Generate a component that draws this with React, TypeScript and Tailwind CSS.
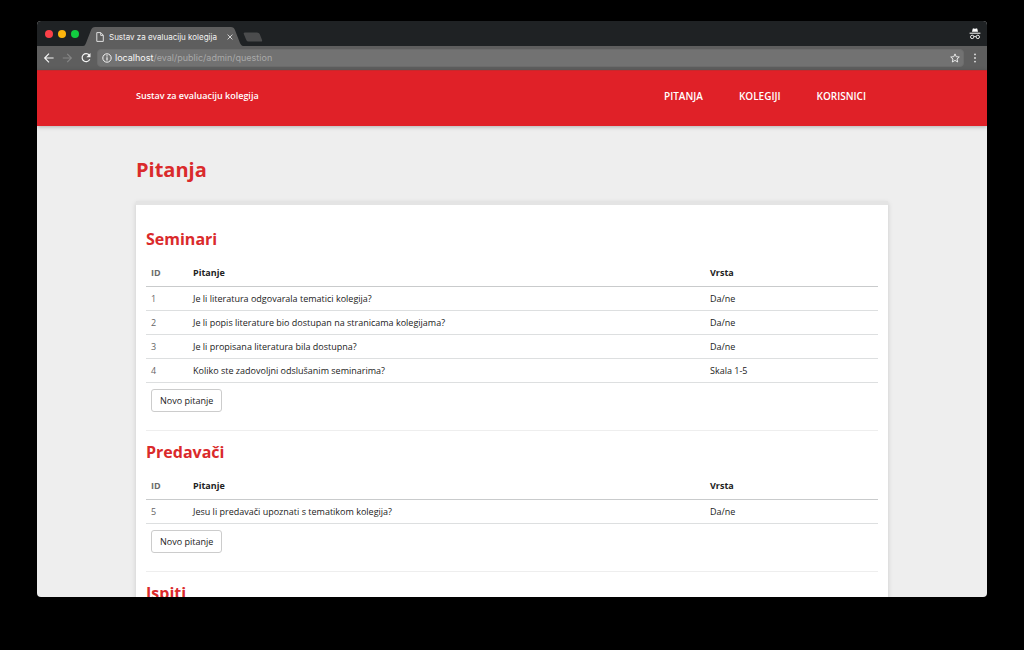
import React from "react";

type Question = { id: number; text: string; kind: string };
type Section = { title: string; questions: Question[] };

const sections: Section[] = [
  {
    title: "Seminari",
    questions: [
      { id: 1, text: "Je li literatura odgovarala tematici kolegija?", kind: "Da/ne" },
      { id: 2, text: "Je li popis literature bio dostupan na stranicama kolegijama?", kind: "Da/ne" },
      { id: 3, text: "Je li propisana literatura bila dostupna?", kind: "Da/ne" },
      { id: 4, text: "Koliko ste zadovoljni odslušanim seminarima?", kind: "Skala 1-5" },
    ],
  },
  {
    title: "Predavači",
    questions: [{ id: 5, text: "Jesu li predavači upoznati s tematikom kolegija?", kind: "Da/ne" }],
  },
  { title: "Ispiti", questions: [] },
];

const navItems = ["Pitanja", "Kolegiji", "Korisnici"];

function TabStrip() {
  return (
    <div className="flex h-[25px] shrink-0 items-end bg-[#1f2224] pr-1">
      <div className="flex items-center gap-[5px] self-center pl-2">
        <span className="size-2 rounded-full bg-[#fc4048]" />
        <span className="size-2 rounded-full bg-[#fdb50c]" />
        <span className="size-2 rounded-full bg-[#12cd40]" />
      </div>
      <div className="relative ml-1 flex h-[19px] w-[160px] items-center pl-[13px] pr-[9px]">
        <svg className="absolute inset-0 size-full" viewBox="0 0 159 19" preserveAspectRatio="none" aria-hidden="true">
          <path d="M0 19C2 19 2 18 3 16L8 3Q9 0 12 0H147Q150 0 151 3L156 16C157 18 158 19 159 19Z" fill="#5e5e5e" />
        </svg>
        <svg className="relative mr-[5px] h-[10px] w-2 shrink-0" viewBox="0 0 8 10" fill="none" stroke="#dedede" aria-hidden="true">
          <path d="M.8.6H4.800L7.300 3.200V9.400H.8ZM4.700.8V3.400H7.200" />
        </svg>
        <span className="relative flex-1 whitespace-nowrap text-[8px] leading-3 text-[#f3f3f3]">Sustav za evaluaciju kolegija</span>
        <button type="button" aria-label="Zatvori karticu" className="relative flex size-2 items-center justify-center">
          <svg className="size-[6px]" viewBox="0 0 6 6" stroke="#d2d2d2" aria-hidden="true">
            <path d="M.6.6 5.400 5.400M5.400.6.6 5.400" />
          </svg>
        </button>
      </div>
      <button type="button" aria-label="Nova kartica" className="mb-1 h-[10px] w-5">
        <svg className="size-full" viewBox="0 0 20 10" aria-hidden="true">
          <path d="M2 .5H14Q16 .5 16.700 2L19 8Q19.500 9.500 18 9.500H5.500Q4 9.500 3.300 8L.8 2Q.3.5 2 .5Z" fill="#4b4c4d" />
        </svg>
      </button>
      <svg className="ml-auto mr-[2px] h-3 w-3 self-center" viewBox="0 0 12 12" fill="none" aria-hidden="true">
        <path d="M3 3.800 3.700.8Q3.900.2 4.500.4L6 .8 7.500.4Q8.100.2 8.300.8L9 3.800Z" fill="#fff" />
        <path d="M.6 5.200H11.400" stroke="#fff" />
        <circle cx="3.200" cy="8.900" r="1.700" stroke="#fff" strokeWidth=".9" />
        <circle cx="8.800" cy="8.900" r="1.700" stroke="#fff" strokeWidth=".9" />
        <path d="M4.900 8.600Q6 7.900 7.100 8.600" stroke="#fff" strokeWidth=".8" />
      </svg>
    </div>
  );
}

function Toolbar() {
  return (
    <div className="flex h-6 shrink-0 items-center bg-[#5e5e5e] pl-[6px] pr-[9px]">
      <button type="button" aria-label="Natrag" className="size-3">
        <svg className="size-full" viewBox="0 0 12 12" fill="none" stroke="#f4f4f4" strokeWidth="1.200" aria-hidden="true">
          <path d="M10.600 6H1.800M6 1.700 1.700 6 6 10.300" />
        </svg>
      </button>
      <button type="button" aria-label="Naprijed" className="ml-[6px] size-3">
        <svg className="size-full" viewBox="0 0 12 12" fill="none" stroke="#868686" strokeWidth="1.100" aria-hidden="true">
          <path d="M1.800 6H10.200M6.200 1.800 10.400 6 6.200 10.200" />
        </svg>
      </button>
      <button type="button" aria-label="Osvježi" className="ml-[7px] size-3">
        <svg className="size-full" viewBox="0 0 12 12" fill="none" aria-hidden="true">
          <path d="M9.300 3.200A4 4 0 1 0 9.800 7.300" stroke="#f4f4f4" strokeWidth="1.200" />
          <path d="M10.500 1V5.200H6.300Z" fill="#f4f4f4" />
        </svg>
      </button>
      <div className="ml-[5px] flex h-[18px] flex-1 items-center rounded-sm border border-[#6c6c6c] bg-[#727272] pl-1 pr-[3px]">
        <svg className="size-[10px]" viewBox="0 0 10 10" fill="none" stroke="#f4f4f4" aria-hidden="true">
          <circle cx="5" cy="5" r="4.200" />
          <path d="M5 4.300V7.500M5 2.300V3.400" strokeWidth="1.200" />
        </svg>
        <a href="#" className="ml-[3px] text-[9px] leading-3 text-[#a9a9a9]">
          <span className="text-[#f6f6f6]">localhost</span>/eval/public/admin/question
        </a>
        <button type="button" aria-label="Dodaj oznaku" className="ml-auto size-[10px]">
          <svg className="size-full" viewBox="0 0 10 10" fill="none" stroke="#f4f4f4" strokeWidth=".9" aria-hidden="true">
            <path d="M5 .9 6.200 3.700 9.300 4 7 6 7.700 9 5 7.400 2.300 9 3 6 .7 4 3.800 3.700Z" />
          </svg>
        </button>
      </div>
      <button type="button" aria-label="Izbornik" className="ml-2 h-[10px] w-[6px]">
        <svg className="size-full" viewBox="0 0 6 10" fill="#e6e6e6" aria-hidden="true">
          <circle cx="3" cy="1.400" r=".9" />
          <circle cx="3" cy="5" r=".9" />
          <circle cx="3" cy="8.600" r=".9" />
        </svg>
      </button>
    </div>
  );
}

function QuestionTable({ questions }: { questions: Question[] }) {
  return (
    <table className="mt-[11px] w-full table-fixed border-separate border-spacing-0 text-left text-[9px] leading-3 text-[#222222]">
      <thead>
        <tr className="h-[26px] font-bold [&>th]:border-b [&>th]:border-[#c9cbcc] [&>th]:px-[5px] [&>th]:pb-[2px]">
          <th className="w-[42px] text-[#6a6a6a]">ID</th>
          <th>Pitanje</th>
          <th className="w-[173px]">Vrsta</th>
        </tr>
      </thead>
      <tbody>
        {questions.map((q) => (
          <tr key={q.id} className="h-6 [&>td]:border-b [&>td]:border-[#dddfe0] [&>td]:px-[5px]">
            <td className="text-[#666666]">{q.id}</td>
            <td>{q.text}</td>
            <td>{q.kind}</td>
          </tr>
        ))}
      </tbody>
    </table>
  );
}

function QuestionSection({ title, questions }: Section) {
  return (
    <section className="border-t border-[#eeeeee] pt-[10px] first:border-t-0 first:pt-[13px]">
      <h2 className="text-[16px] font-bold leading-[22px] text-[#da2a2b]">{title}</h2>
      {questions.length > 0 && (
        <>
          <QuestionTable questions={questions} />
          <button type="button" className="mb-[18px] ml-[5px] mt-[6px] h-[23px] rounded-[3px] border border-[#cccccc] bg-white px-2 text-[9px] leading-3 text-[#222222]">
            Novo pitanje
          </button>
        </>
      )}
    </section>
  );
}

export default function App() {
  return (
    <div className="flex h-screen flex-col bg-black px-[37px] pb-[53px] pt-[21px] font-['Open_Sans',sans-serif]">
      <div className="flex min-h-0 flex-1 flex-col overflow-hidden rounded-[4px] bg-[#eeeeee]">
        <div className="shrink-0 font-['Inter',sans-serif]">
          <TabStrip />
          <Toolbar />
        </div>
        <header className="relative h-14 shrink-0 border-t border-[#c8282c] bg-[#e02128] shadow-[0_1px_4px_rgba(0,0,0,0.25)]">
          <div className="mx-auto flex max-w-[752px] items-center justify-between pr-[22px] pt-[19px] font-semibold leading-3 text-white">
            <a href="#" className="text-[9px]">Sustav za evaluaciju kolegija</a>
            <nav className="flex gap-9 text-[10px] uppercase">
              {navItems.map((item) => (
                <a key={item} href="#">{item}</a>
              ))}
            </nav>
          </div>
        </header>
        <main className="mx-auto flex min-h-0 w-full max-w-[752px] flex-1 flex-col pt-[30px]">
          <h1 className="text-[20px] font-bold leading-7 text-[#da2a2b]">Pitanja</h1>
          <div className="mt-[17px] flex-1 border-t-4 border-[#e4e4e4] bg-white px-[10px] pt-[10px] shadow-[0_2px_5px_rgba(0,0,0,0.15)]">
            {sections.map((section) => (
              <QuestionSection key={section.title} {...section} />
            ))}
          </div>
        </main>
      </div>
    </div>
  );
}
